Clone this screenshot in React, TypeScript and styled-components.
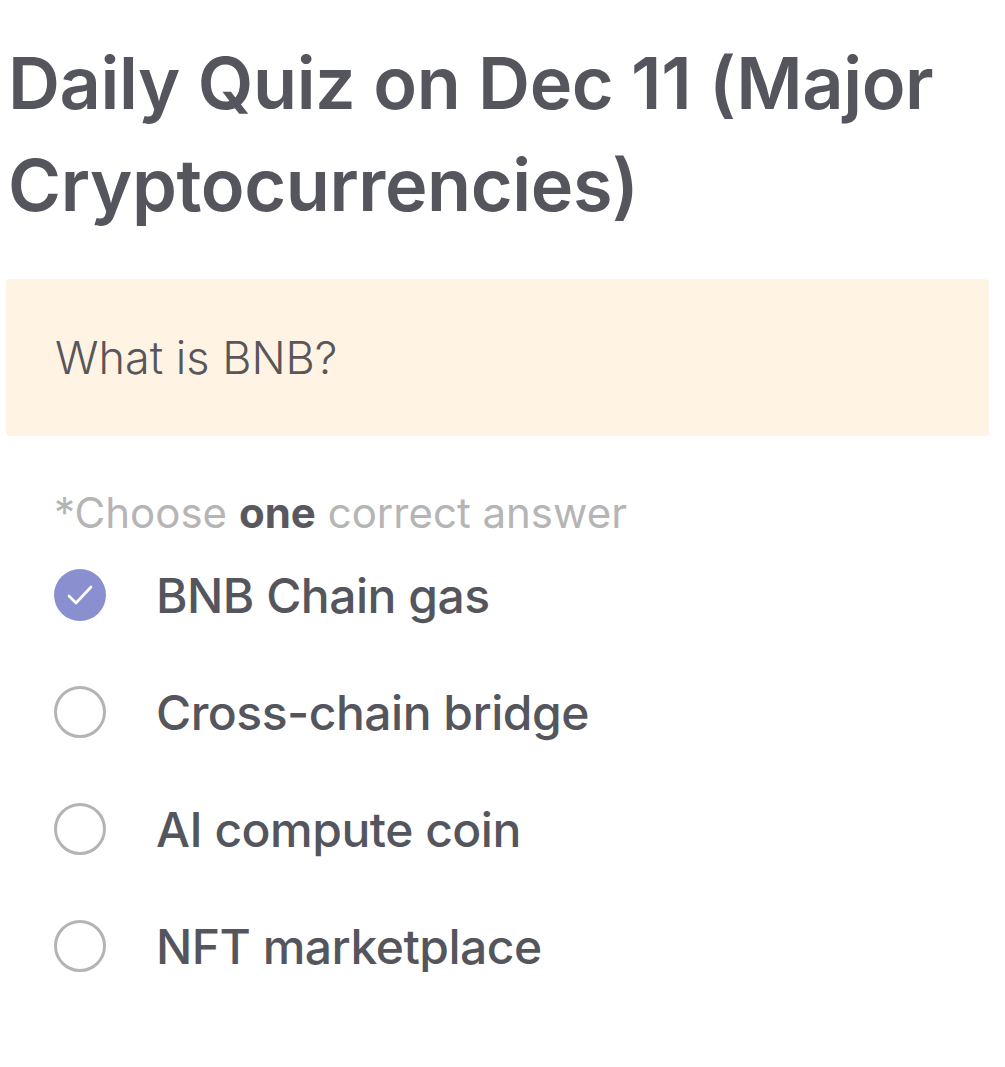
import React from "react";
import styled, { createGlobalStyle } from "styled-components";

const Global = createGlobalStyle`
  html, body { margin: 0; padding: 0; background: #ffffff; }
  body { font-family: Inter, "Noto Sans", sans-serif; }
`;

const Page = styled.main`
  width: 1005px;
  padding: 32px 16px 0 6px;
  box-sizing: border-box;
`;

const Title = styled.h1`
  margin: 0 0 0 2px;
  font-family: Inter, sans-serif;
  font-size: 72px;
  line-height: 102px;
  font-weight: 600;
  color: #55565d;
  letter-spacing: -0.4px;
`;

const QuestionBox = styled.section`
  margin-top: 43px;
  height: 157px;
  background: #fff4e3;
  border-radius: 4px;
  display: flex;
  align-items: center;
  padding-left: 49px;
  box-sizing: border-box;
`;

const QuestionText = styled.p`
  margin: 0;
  font-family: Inter, sans-serif;
  font-size: 45px;
  font-weight: 300;
  color: #58565a;
  letter-spacing: 0;
`;

const Body = styled.div`
  padding-left: 48px;
  margin-top: 51px;
`;

const Hint = styled.p`
  margin: 0;
  font-family: Inter, sans-serif;
  font-size: 42px;
  line-height: 52px;
  font-weight: 400;
  color: #b5b5b5;
`;

const Strong = styled.b`
  font-weight: 700;
  color: #58585e;
`;

const Options = styled.ul`
  list-style: none;
  margin: 30px 0 0;
  padding: 0;
  display: flex;
  flex-direction: column;
  gap: 65px;
`;

const Option = styled.li`
  display: flex;
  align-items: center;
  gap: 50px;
  height: 52px;
`;

const Radio = styled.span<{ $checked?: boolean }>`
  width: 52px;
  height: 52px;
  border-radius: 50%;
  box-sizing: border-box;
  flex: none;
  display: flex;
  align-items: center;
  justify-content: center;
  background: ${(p) => (p.$checked ? "#8a8fd0" : "transparent")};
  border: ${(p) => (p.$checked ? "none" : "3.5px solid #b4b4b4")};
`;

const Label = styled.span`
  font-family: Inter, sans-serif;
  font-size: 48px;
  font-weight: 500;
  color: #55565d;
  letter-spacing: -0.5px;
`;

const options = [
  { text: "BNB Chain gas", checked: true },
  { text: "Cross-chain bridge" },
  { text: "AI compute coin" },
  { text: "NFT marketplace" },
];

export default function App() {
  return (
    <Page>
      <Global />
      <Title>Daily Quiz on Dec 11 (Major Cryptocurrencies)</Title>
      <QuestionBox>
        <QuestionText>What is BNB?</QuestionText>
      </QuestionBox>
      <Body>
        <Hint>
          *Choose <Strong>one</Strong> correct answer
        </Hint>
        <Options>
          {options.map((o) => (
            <Option key={o.text}>
              <Radio $checked={o.checked}>
                {o.checked && (
                  <svg width="30" height="30" viewBox="0 0 30 30" fill="none">
                    <path d="M4 16l7 7L26 7" stroke="#ffffff" strokeWidth="2.6" strokeLinecap="round" strokeLinejoin="round" />
                  </svg>
                )}
              </Radio>
              <Label>{o.text}</Label>
            </Option>
          ))}
        </Options>
      </Body>
    </Page>
  );
}
